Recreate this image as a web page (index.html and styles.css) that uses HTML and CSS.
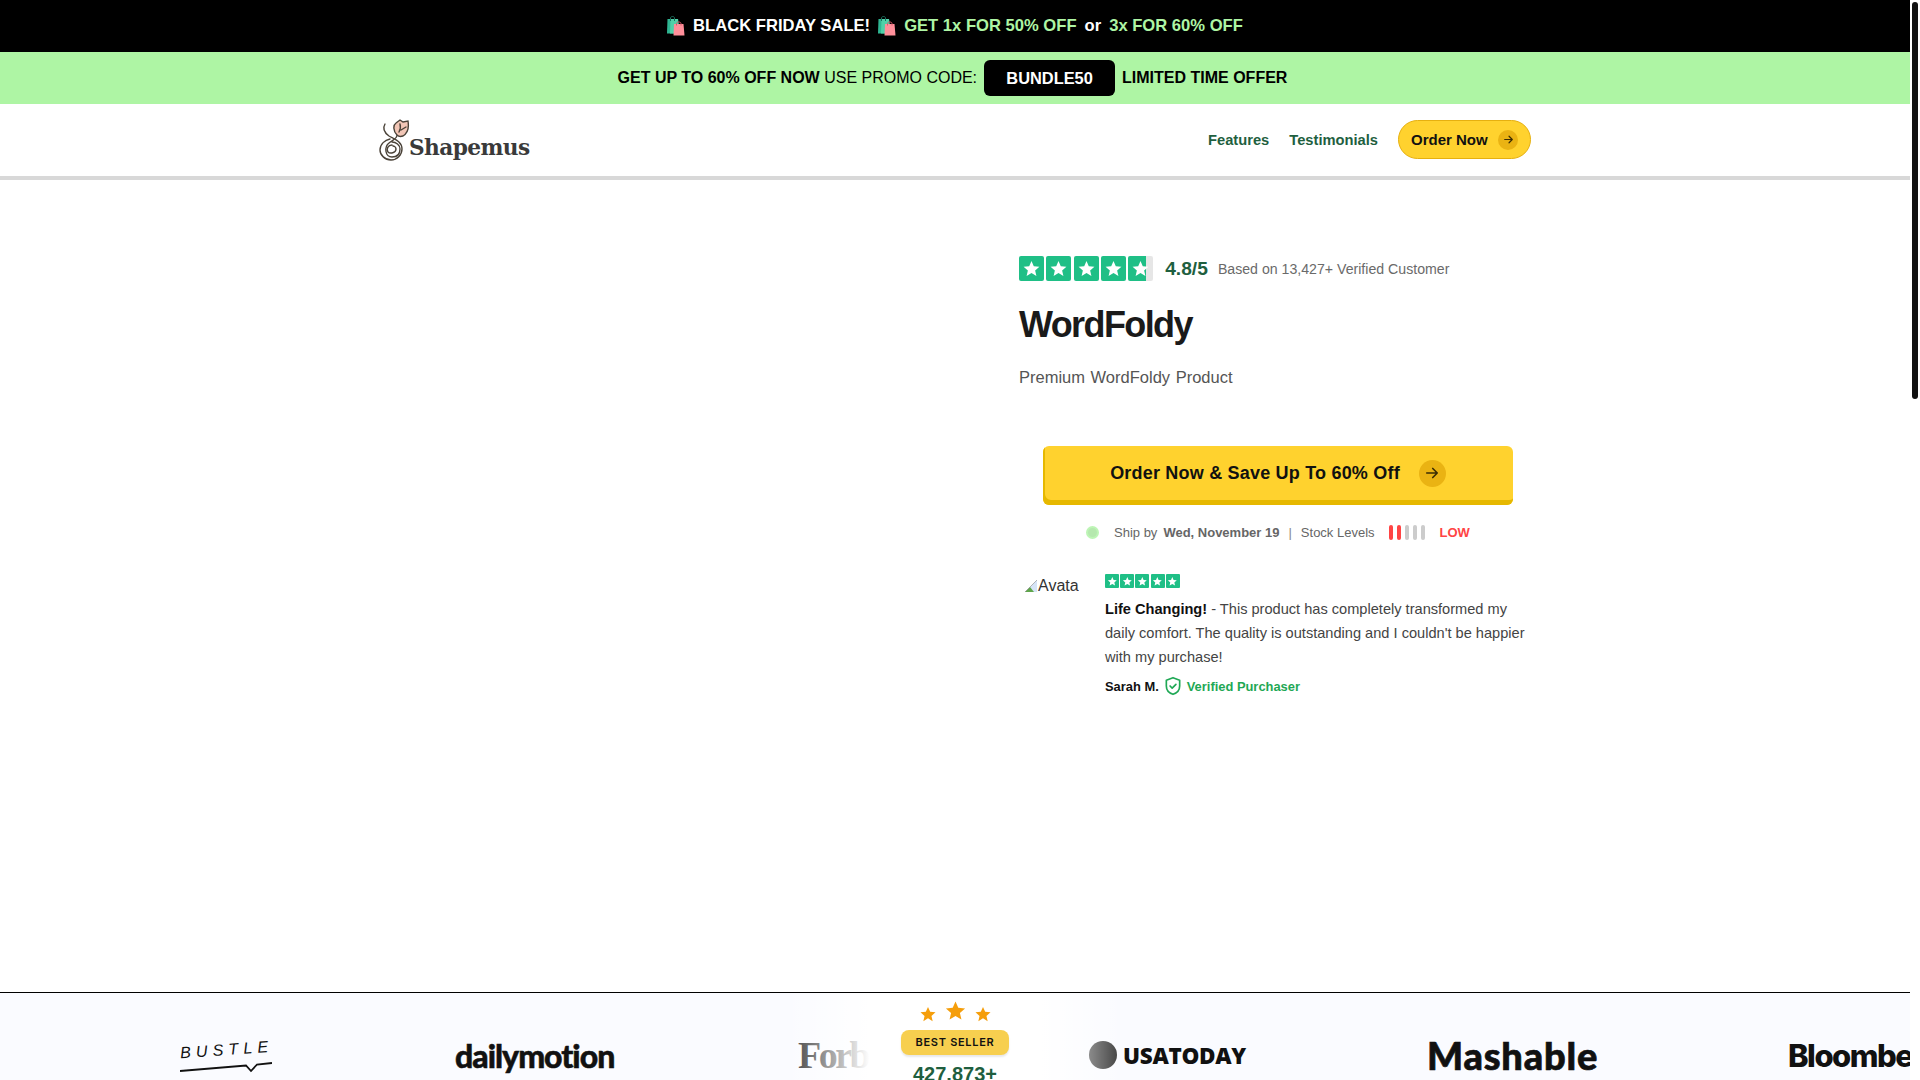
FILE: index.html
```html
<!DOCTYPE html>
<html>
<head>
    <meta charset="UTF-8">
    <title>WordFoldy - Shapemus</title>
    <link rel="stylesheet" href="styles.css">
</head>
<body>
<svg class="defs">
    <defs>
        <symbol id="star" viewBox="0 0 24 24"><path d="M12 2.500l2.900 6.600 7.100.7-5.400 4.700 1.600 7-6.200-3.700-6.200 3.700 1.600-7L2 9.800l7.100-.7z"/></symbol>
        <symbol id="bag" viewBox="0 0 18 20">
            <path d="M.5 3H11l1.500 14.500H0z" fill="#2fb592"/>
            <path d="M3.500 3H11l1.500 14.500H3z" fill="#4fd0a8"/>
            <path d="M3.500 5V2C3.500 0 7.500 0 7.500 2V5" fill="none" stroke="#1c6f5c" stroke-width="1"/>
            <path d="M7 8h9.500l1 11.500H6.500z" fill="#ff8f9a"/>
            <path d="M9.500 9.500V7.500c0-2 4.500-2 4.500 0V9.500" fill="none" stroke="#d65a6a" stroke-width="1"/>
        </symbol>
        <symbol id="arrow" viewBox="0 0 24 24"><path d="M5 12h14M13 6l6 6-6 6" fill="none" stroke="currentColor" stroke-width="2.200" stroke-linecap="round" stroke-linejoin="round"/></symbol>
    </defs>
</svg>

<div class="page">
    <div class="promo-black">
        <svg class="bag"><use href="#bag"/></svg>
        <span>BLACK FRIDAY SALE!</span>
        <svg class="bag"><use href="#bag"/></svg>
        <span class="green">GET 1x FOR 50% OFF</span>
        <span>or</span>
        <span class="green">3x FOR 60% OFF</span>
    </div>

    <div class="promo-green">
        <span><b>GET UP TO 60% OFF NOW</b> USE PROMO CODE:</span>
        <b class="code">BUNDLE50</b>
        <b>LIMITED TIME OFFER</b>
    </div>

    <header class="nav">
        <div class="nav-inner">
            <a class="logo" href="#">
                <svg class="logo-mark" viewBox="0 0 32 42" fill="none" stroke="#4a4238" stroke-width="1.400" stroke-linecap="round">
                    <path d="M7 5C4 10 7 14 11 17c7 4 13 6 13 13 0 6-5 11-11 11C7 41 2 36 2 31c0-6 5-10 10-11"/>
                    <path d="M19 15c1 5-5 6-8 9-5 4-4 14 3 14 5 0 8-3 8-8 0-4-4-7-8-7"/>
                    <path d="M14 26c-4 0-6 4-4 7 2 2 8 1 8-3 0-2-2-3-3-3"/>
                    <path d="M19 16c-4-4-4-10-1-12l4-3 3 2 5-1c1 6 0 12-5 15-3 1-5 0-6-1z" fill="#f2c6b6"/>
                    <path d="M22 5c1 3 0 6-1 8M28 8l-5 3"/>
                </svg>
                <span class="logo-text">Shapemus</span>
            </a>
            <nav class="nav-links">
                <a href="#">Features</a>
                <a href="#">Testimonials</a>
                <a class="nav-btn" href="#">Order Now <i class="arrow-dot"><svg><use href="#arrow"/></svg></i></a>
            </nav>
        </div>
    </header>

    <main class="hero">
        <div class="hero-media"></div>
        <section class="product">
            <div class="rating">
                <div class="tp-stars">
                    <i class="tp"><svg><use href="#star"/></svg></i>
                    <i class="tp"><svg><use href="#star"/></svg></i>
                    <i class="tp"><svg><use href="#star"/></svg></i>
                    <i class="tp"><svg><use href="#star"/></svg></i>
                    <i class="tp tp-part"><svg><use href="#star"/></svg></i>
                </div>
                <b class="score">4.8/5</b>
                <span class="based">Based on 13,427+ Verified Customer</span>
            </div>
            <h1 class="title">WordFoldy</h1>
            <p class="subtitle">Premium WordFoldy Product</p>

            <a class="cta" href="#">Order Now &amp; Save Up To 60% Off <i class="arrow-dot big"><svg><use href="#arrow"/></svg></i></a>

            <div class="ship">
                <i class="dot"></i>
                <span class="ship-by">Ship by</span>
                <b>Wed, November 19</b>
                <span class="sep">|</span>
                <span>Stock Levels</span>
                <div class="levels"><i class="on"></i><i class="on"></i><i></i><i></i><i></i></div>
                <b class="low">LOW</b>
            </div>

            <div class="review">
                <div class="avatar">
                    <svg class="broken" viewBox="0 0 14 14"><path d="M1 13L13 1v12z" fill="#d6e4f7"/><path d="M1 13l5-5 4 5z" fill="#5fa64b"/><path d="M1 13L13 1" stroke="#888" stroke-width=".6"/></svg>
                    <span>Avatar</span>
                </div>
                <div class="review-body">
                    <div class="mini-stars">
                        <i class="tp"><svg><use href="#star"/></svg></i>
                        <i class="tp"><svg><use href="#star"/></svg></i>
                        <i class="tp"><svg><use href="#star"/></svg></i>
                        <i class="tp"><svg><use href="#star"/></svg></i>
                        <i class="tp"><svg><use href="#star"/></svg></i>
                    </div>
                    <p class="review-text"><b>Life Changing!</b> - This product has completely transformed my daily comfort. The quality is outstanding and I couldn't be happier with my purchase!</p>
                    <div class="reviewer">
                        <b>Sarah M.</b>
                        <svg class="shield" viewBox="0 0 24 24" fill="none" stroke="#1fa855" stroke-width="2" stroke-linecap="round" stroke-linejoin="round"><path d="M12 2l8 3v7c0 5-3.500 8.500-8 10-4.500-1.500-8-5-8-10V5z"/><path d="M8.500 12l2.500 2.500 4.500-4.500"/></svg>
                        <b class="verified">Verified Purchaser</b>
                    </div>
                </div>
            </div>
        </section>
    </main>

    <section class="press">
        <div class="press-track">
            <div class="press-logo bustle">
                <span>BUSTLE</span>
                <svg viewBox="0 0 92 14" fill="none" stroke="#111" stroke-width="1.800"><path d="M0 12L66 6.500l5 5.500 6-6.500 15-1.500"/></svg>
            </div>
            <div class="press-logo daily">dailymotion</div>
            <div class="press-logo forbes">Forbes</div>
            <div class="press-logo usa"><i></i><span>USATODAY</span></div>
            <div class="press-logo mashable">Mashable</div>
            <div class="press-logo bloomberg">Bloomberg</div>
        </div>
        <div class="seller">
            <div class="seller-stars">
                <svg class="s"><use href="#star"/></svg>
                <svg class="l"><use href="#star"/></svg>
                <svg class="s"><use href="#star"/></svg>
            </div>
            <div class="seller-pill">BEST SELLER</div>
            <div class="seller-count">427,873+</div>
        </div>
    </section>
</div>

<div class="rail"><div class="rail-thumb"></div></div>
</body>
</html>
```

FILE: styles.css
```css
* {
    margin: 0;
    padding: 0;
    box-sizing: border-box;
}

body {
    height: 100vh;
    display: flex;
    overflow: hidden;
    font-family: "Liberation Sans", Arial, sans-serif;
    color: #111;
    background: #fff;
}

a {
    text-decoration: none;
    color: inherit;
}

i {
    font-style: normal;
    display: block;
}

.defs {
    display: none;
}

.page {
    flex: 1;
    min-width: 0;
    height: 100%;
    overflow: hidden;
}

/* scrollbar of the window */
.rail {
    flex: none;
    width: 10px;
    padding: 2px;
    background: #fff;
}

.rail-thumb {
    height: 397px;
    background: #111;
    border-radius: 3px;
}

/* promo bars */
.promo-black {
    height: 52px;
    background: #000;
    color: #fff;
    display: flex;
    align-items: center;
    justify-content: center;
    gap: 8px;
    font-size: 16.600px;
    font-weight: bold;
}

.promo-black .green {
    color: #aef5a4;
}

.bag {
    width: 18px;
    height: 20px;
}

.promo-green {
    height: 52px;
    padding-right: 5px;
    background: #aef5a4;
    display: flex;
    align-items: center;
    justify-content: center;
    gap: 7px;
    font-size: 16px;
    color: #000;
}

.code {
    width: 131px;
    height: 36px;
    line-height: 36px;
    text-align: center;
    font-size: 16.400px;
    background: #000;
    color: #fff;
    border-radius: 6px;
}

/* nav */
.nav {
    height: 76px;
    border-bottom: 4px solid #d8d8d8;
}

.nav-inner {
    width: 1152px;
    height: 71px;
    margin: 0 auto;
    display: flex;
    align-items: center;
    justify-content: space-between;
}

.logo {
    display: flex;
    align-items: flex-end;
    margin-left: -1px;
}

.logo-mark {
    width: 32px;
    height: 42px;
}

.logo-text {
    font-family: "DejaVu Serif", serif;
    font-weight: bold;
    font-size: 21.700px;
    letter-spacing: -0.6px;
    color: #3a3a3a;
    margin-left: -1px;
    margin-bottom: 1px;
}

.nav-links {
    display: flex;
    align-items: center;
    gap: 20px;
    font-size: 14.700px;
    font-weight: bold;
    color: #1f5f3f;
}

.nav-btn {
    width: 133px;
    height: 39px;
    padding: 0 12px;
    display: flex;
    align-items: center;
    justify-content: space-between;
    font-size: 15px;
    color: #111;
    background: #ffd22e;
    border: 1px solid #e6b00f;
    border-radius: 20px;
}

.arrow-dot {
    width: 20px;
    height: 20px;
    border-radius: 50%;
    background: #eab313;
    color: #3a2c05;
    display: flex;
    align-items: center;
    justify-content: center;
}

.arrow-dot svg {
    width: 13px;
    height: 13px;
}

.arrow-dot.big {
    width: 27px;
    height: 27px;
    margin-left: 19px;
}

.arrow-dot.big svg {
    width: 18px;
    height: 18px;
}

/* hero */
.hero {
    width: 1152px;
    height: 812px;
    margin: 0 auto;
    display: grid;
    grid-template-columns: 1fr 512px;
}

.product {
    padding-top: 76px;
}

.rating {
    display: flex;
    align-items: center;
    height: 25px;
}

.tp-stars {
    display: flex;
    gap: 2.300px;
    margin-right: 12px;
}

.tp {
    width: 25px;
    height: 25px;
    border-radius: 2px;
    background: #1fbf86;
    display: flex;
    align-items: center;
    justify-content: center;
}

.tp svg {
    width: 76%;
    height: 76%;
    fill: #fff;
}

.tp-part {
    background: linear-gradient(90deg, #1fbf86 72%, #e6e6e6 72%);
}

.score {
    font-size: 19.200px;
    color: #1f5f3f;
    margin-right: 10px;
}

.based {
    font-size: 14.150px;
    color: #6a6a6a;
}

.title {
    font-size: 36px;
    line-height: 46px;
    letter-spacing: -1.600px;
    color: #1a1a1a;
    margin-top: 21px;
}

.subtitle {
    font-size: 16.500px;
    line-height: 24px;
    word-spacing: 1px;
    color: #555;
    margin-top: 17px;
}

.cta {
    width: 470px;
    height: 59px;
    margin: 57px 0 0 24px;
    padding-bottom: 5px;
    display: flex;
    align-items: center;
    justify-content: center;
    font-size: 18px;
    font-weight: bold;
    letter-spacing: .2px;
    background: #ffd22e;
    border-radius: 6px;
    box-shadow: inset 2px -5px 0 #e6b800;
}

.ship {
    margin: 19px 0 0 67px;
    height: 16px;
    display: flex;
    align-items: center;
    gap: 6px;
    font-size: 13px;
    color: #666;
}

.dot {
    width: 13px;
    height: 13px;
    border-radius: 50%;
    background: #b5e8ae;
    border: 2px solid #bdf5b5;
    margin-right: 9px;
}

.sep {
    margin: 0 3px;
    color: #888;
}

.levels {
    display: flex;
    gap: 4px;
    margin: 0 9px 0 8px;
}

.levels i {
    width: 4px;
    height: 15px;
    border-radius: 2px;
    background: #ccc;
}

.levels i.on {
    background: #f44;
}

.low {
    color: #f44;
}

.review {
    display: flex;
    margin-top: 34px;
}

.avatar {
    flex: none;
    width: 55px;
    height: 24px;
    margin: 0 26px 0 5px;
    display: flex;
    align-items: center;
    overflow: hidden;
    font-size: 16px;
    color: #333;
}

.broken {
    width: 14px;
    height: 14px;
    flex: none;
}

.mini-stars {
    display: flex;
    gap: 1.200px;
}

.mini-stars .tp {
    width: 14px;
    height: 14px;
    border-radius: 1px;
}

.review-text {
    font-size: 14.600px;
    line-height: 24px;
    color: #444;
    margin-top: 9px;
}

.review-text b {
    color: #111;
}

.reviewer {
    display: flex;
    align-items: center;
    gap: 4px;
    margin-top: 7px;
    font-size: 12.900px;
}

.shield {
    width: 20px;
    height: 20px;
}

.verified {
    color: #1fa855;
}

/* press strip */
.press {
    position: relative;
    height: 120px;
    background: #fafbff;
    border-top: 1px solid #000;
    overflow: hidden;
}

.press-track {
    display: flex;
    gap: 183px;
    padding: 45px 0 0 180px;
    width: 2400px;
}

.press-logo {
    flex: none;
    height: 34px;
    display: flex;
    align-items: center;
    color: #111;
    white-space: nowrap;
}

.bustle {
    width: 92px;
    margin-top: 3px;
    flex-direction: column;
    align-items: flex-start;
}

.bustle span {
    font-size: 16px;
    font-style: italic;
    letter-spacing: 5.200px;
    line-height: 18px;
    transform: rotate(-4deg);
}

.bustle svg {
    width: 92px;
    height: 14px;
}

.daily {
    width: 160px;
    font-family: "Lato", sans-serif;
    font-weight: 900;
    font-size: 32px;
    letter-spacing: -1px;
    -webkit-text-stroke: .5px #111;
}

.forbes {
    width: 108px;
    font-family: "Liberation Serif", serif;
    font-weight: bold;
    font-size: 38px;
    letter-spacing: -2.500px;
    color: #333;
}

.usa {
    width: 155px;
    gap: 6px;
    font-family: "Open Sans", sans-serif;
    font-weight: 800;
    font-size: 22.500px;
    letter-spacing: -.3px;
}

.usa i {
    width: 28px;
    height: 28px;
    flex: none;
    border-radius: 50%;
    background: #333;
}

.mashable {
    width: 178px;
    font-family: "Lato", sans-serif;
    font-weight: 900;
    font-size: 38px;
    letter-spacing: .8px;
    -webkit-text-stroke: .7px #111;
}

.bloomberg {
    font-family: "Inter", sans-serif;
    font-weight: 800;
    font-size: 31px;
    letter-spacing: -1.500px;
}

.seller {
    position: absolute;
    top: 0;
    left: 784px;
    width: 342px;
    height: 100%;
    background: linear-gradient(90deg, rgba(255, 255, 255, 0), #fff 25%, #fff 75%, rgba(255, 255, 255, 0));
    display: flex;
    flex-direction: column;
    align-items: center;
}

.seller-stars {
    display: flex;
    align-items: flex-end;
    gap: 7px;
    height: 30px;
}

.seller-stars svg {
    fill: #f59e0b;
}

.seller-stars .s {
    width: 18px;
    height: 18px;
}

.seller-stars .l {
    width: 23px;
    height: 23px;
    margin-bottom: 1px;
}

.seller-pill {
    width: 108px;
    height: 25px;
    margin-top: 7px;
    line-height: 24px;
    text-align: center;
    font-family: "Inter", sans-serif;
    font-weight: 600;
    font-size: 11px;
    letter-spacing: .7px;
    background: #f7cf4f;
    border-radius: 8px;
    box-shadow: 0 2px 2px #e8e8e8;
}

.seller-count {
    margin-top: 8px;
    font-size: 20px;
    font-weight: bold;
    color: #1f5f3f;
}
```
